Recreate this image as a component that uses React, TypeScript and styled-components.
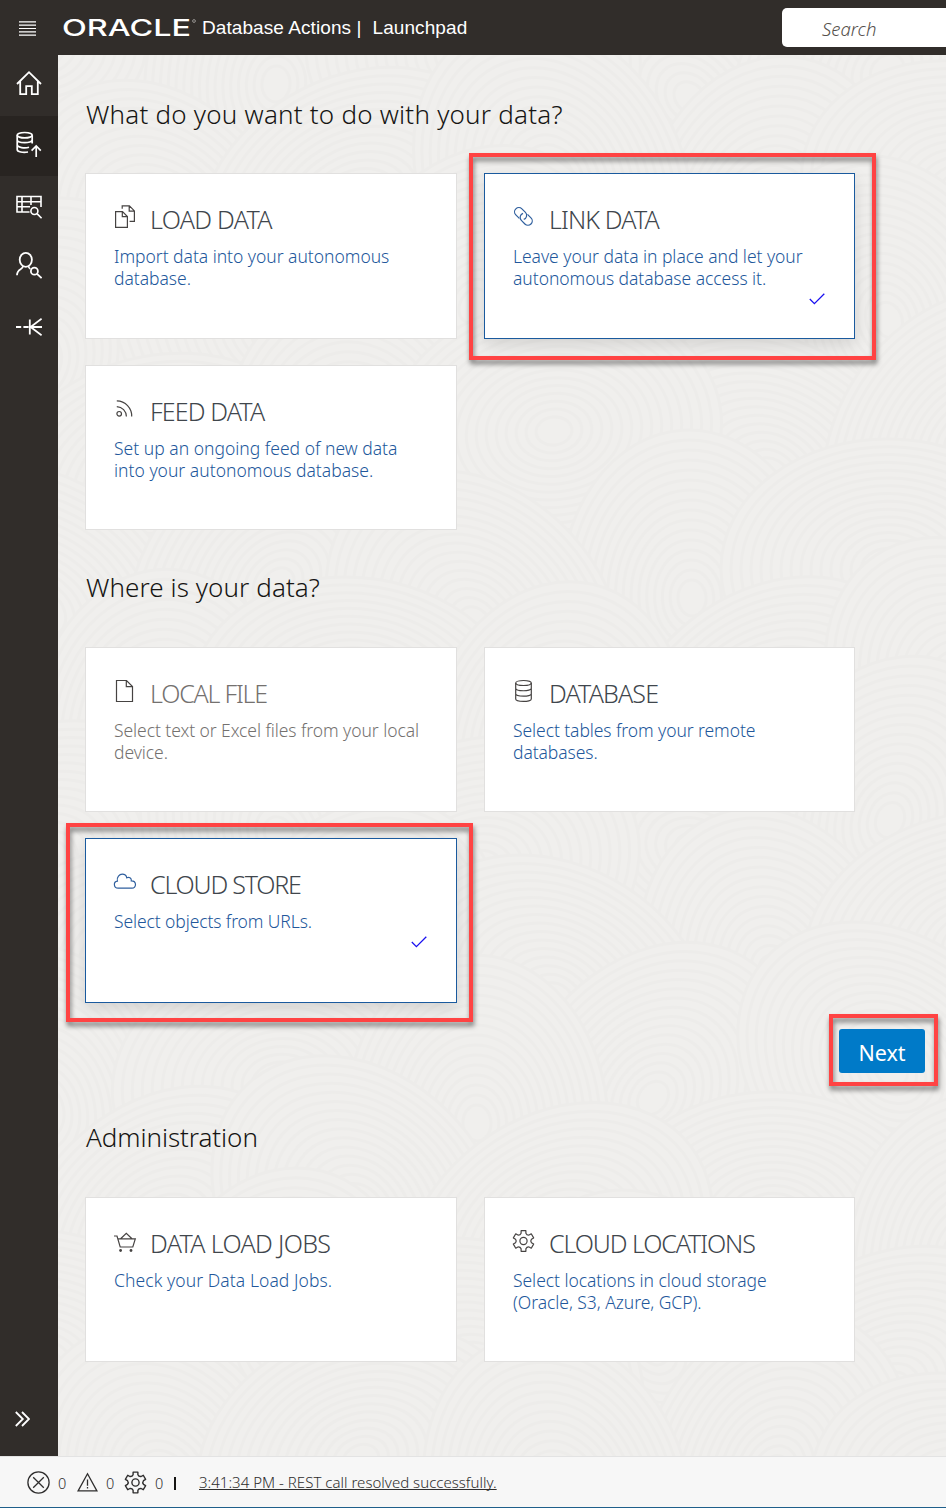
import React from "react";
import styled, { createGlobalStyle, css } from "styled-components";

const sans = `"Noto Sans", "Open Sans", sans-serif`;

const GlobalStyle = createGlobalStyle`
  * { box-sizing: border-box; }
  html, body { margin: 0; padding: 0; }
  body { font-family: ${sans}; font-weight: 300; background: #f0efed; overflow: hidden; }
  h1, h2, h3, p { margin: 0; font-weight: 300; }
  svg { display: block; }
`;

const Page = styled.div`
  display: flex;
  flex-direction: column;
  width: 946px;
  height: 1508px;
`;

const Header = styled.header`
  display: flex;
  align-items: center;
  flex: 0 0 55px;
  background: #312d2a;
  color: #fff;
`;

const MenuButton = styled.div`
  margin: 2px 26px 0 19px;
`;

const Brand = styled.div`
  width: 140px;
`;

const Product = styled.div`
  display: flex;
  gap: 11px;
  flex: 1;
  font: 400 19px/24px "Liberation Sans", Arial, sans-serif;
  letter-spacing: 0.08px;
  white-space: pre;
`;

const Search = styled.div`
  width: 164px;
  height: 39px;
  padding-left: 40px;
  border-radius: 5px 0 0 5px;
  background: #fff;
  color: #55504c;
  font: italic 300 18.5px/41px ${sans};
`;

const Body = styled.div`
  display: flex;
  flex: 1;
  min-height: 0;
`;

const Sidebar = styled.nav`
  display: flex;
  flex-direction: column;
  width: 58px;
  background: #312d2a;
  color: #fff;
`;

const NavItem = styled.div<{ $active?: boolean; $last?: boolean; $lift?: number }>`
  display: flex;
  align-items: center;
  justify-content: center;
  height: ${(p) => (p.$active ? 60 : 61)}px;
  padding-bottom: ${(p) => p.$lift ?? 0}px;
  ${(p) => p.$active && css`background: #282421;`}
  ${(p) =>
    p.$last &&
    css`
      margin-top: auto;
      height: 74px;
      padding-right: 13px;
    `}
`;

const Main = styled.main`
  position: relative;
  flex: 1;
  min-width: 0;
  padding: 41px 0 0 27px;
  overflow: hidden;
  background: #f0efed;
`;

const Backdrop = styled.svg`
  position: absolute;
  inset: 0;
`;

const Section = styled.section<{ $top?: number }>`
  position: relative;
  margin-top: ${(p) => p.$top ?? 0}px;
`;

const SectionTitle = styled.h1<{ $gap: number; $track: number }>`
  margin-bottom: ${(p) => p.$gap}px;
  padding-left: 1px;
  color: #161513;
  font-size: 26px;
  line-height: 36px;
  letter-spacing: ${(p) => p.$track}px;
  white-space: nowrap;
`;

const CardGrid = styled.div<{ $rows: string }>`
  display: grid;
  grid-template-columns: 372px 371px;
  grid-template-rows: ${(p) => p.$rows};
  gap: 26px 27px;
`;

const CardBox = styled.article<{ $selected?: boolean }>`
  position: relative;
  display: flex;
  flex-direction: column;
  padding: 28px 29px 0 28px;
  border: 1px solid ${(p) => (p.$selected ? "#1a5a9e" : "#e1e0df")};
  background: #fff;
  ${(p) => p.$selected && css`box-shadow: 0 6px 16px rgba(0, 0, 0, 0.12);`}
`;

const CardHead = styled.div<{ $color: string }>`
  display: flex;
  height: 34px;
  color: ${(p) => p.$color};
`;

const IconSlot = styled.div`
  width: 37px;
  margin-left: -1px;
  padding-top: 1px;
`;

const CardTitle = styled.h2<{ $track: number; $muted?: boolean }>`
  color: ${(p) => (p.$muted ? "#74716f" : "#40464c")};
  font-size: 25px;
  font-weight: 340;
  line-height: 34px;
  letter-spacing: ${(p) => p.$track}px;
  white-space: nowrap;
`;

const CardText = styled.p<{ $track: number; $muted?: boolean }>`
  margin-top: 9px;
  color: ${(p) => (p.$muted ? "#74716f" : "#22579b")};
  font-size: 17.5px;
  line-height: 22px;
  letter-spacing: ${(p) => p.$track}px;
  white-space: pre;
`;

const CheckSlot = styled.div`
  align-self: flex-end;
  margin-top: 4px;
`;

const Callout = styled.div<{ $inset: string }>`
  position: absolute;
  inset: ${(p) => p.$inset};
  border: 4px solid #ff4343;
  filter: drop-shadow(1px 4px 2.5px rgba(0, 0, 0, 0.5));
  pointer-events: none;
  z-index: 1;
`;

const Actions = styled.div`
  position: relative;
  display: flex;
  justify-content: flex-end;
  margin: 26px 21px 0 0;
`;

const NextButton = styled.button`
  position: relative;
  width: 86px;
  height: 44px;
  padding: 3px 0 0;
  border: 0;
  border-radius: 3px;
  background: #007ac8;
  color: #fff;
  font: 400 21.5px/40px ${sans};
`;

const Footer = styled.footer`
  display: flex;
  align-items: center;
  flex: 0 0 52px;
  padding-left: 27px;
  border-top: 1px solid #e3e3e3;
  border-bottom: 1px solid #1f5f8b;
  background: #f7f7f7;
  color: #2f2e2e;
`;

const Counter = styled.div<{ $width: number }>`
  display: flex;
  align-items: center;
  gap: 8px;
  width: ${(p) => p.$width}px;
  font-size: 14.5px;
  line-height: 20px;
`;

const Count = styled.span`
  padding-top: 2px;
`;

const Divider = styled.div`
  width: 2px;
  height: 13px;
  margin: 2px 23px 0 0;
  background: #161513;
`;

const StatusLink = styled.a`
  font-size: 15px;
  line-height: 20px;
  text-decoration: underline;
  text-underline-offset: 1px;
  text-decoration-thickness: 1px;
  text-decoration-skip-ink: none;
  letter-spacing: 0.02px;
  white-space: nowrap;
`;

type IconProps = { w: number; h: number; sw?: number; box?: string; children: React.ReactNode };

const Icon = ({ w, h, sw = 1.2, box, children }: IconProps) => (
  <svg
    width={w}
    height={h}
    viewBox={box ?? `0 0 ${w} ${h}`}
    fill="none"
    stroke="currentColor"
    strokeWidth={sw}
    strokeLinejoin="miter"
  >
    {children}
  </svg>
);

const polar = (r: number, deg: number) => {
  const a = (deg * Math.PI) / 180;
  return `${(11.5 + r * Math.cos(a)).toFixed(2)} ${(11.5 + r * Math.sin(a)).toFixed(2)}`;
};

const gearPath =
  "M" +
  [0, 1, 2, 3, 4, 5]
    .map((i) => {
      const a = i * 60 - 90;
      return `${polar(10.6, a - 13)}L${polar(10.6, a + 13)}L${polar(8.2, a + 17)}Q${polar(6.6, a + 30)} ${polar(8.2, a + 43)}`;
    })
    .join("L") +
  "Z";

const Gear = ({ size, sw }: { size: number; sw?: number }) => (
  <Icon w={size} h={size} box="0 0 23 23" sw={sw}>
    <path d={gearPath} strokeLinejoin="round" />
    <circle cx="11.5" cy="11.5" r="3.6" />
  </Icon>
);

const icons = {
  copy: (
    <Icon w={24} h={26}>
      <path d="M2.6 8.6H9.5L14.4 13.5V24.4H2.6ZM9.3 8.8V13.7H14.2M9.2 5.8V2.9H16.4L21.4 7.9V18.4H16.6M16.2 3.1V8.1H21.2" />
    </Icon>
  ),
  link: (
    <Icon w={24} h={26}>
      <g transform="translate(11.4 13.4) rotate(45)">
        <path d="M-1.5 4.3H-6.4A4.3 4.3 0 0 1 -6.4 -4.3H-1.4A4.3 4.3 0 0 1 2.4 1.9" />
        <path d="M1.5 -4.3H6.4A4.3 4.3 0 0 1 6.4 4.3H1.4A4.3 4.3 0 0 1 -2.4 -1.9" />
      </g>
    </Icon>
  ),
  feed: (
    <Icon w={24} h={26}>
      <circle cx="6.2" cy="18.8" r="2.3" />
      <path d="M3.8 11.6A10 10 0 0 1 13.4 21.6M3.8 5.8A15.2 15.2 0 0 1 18.7 21.6" />
    </Icon>
  ),
  file: (
    <Icon w={24} h={26}>
      <path d="M3.5 3.5H13.5L19.5 9.5V24.5H3.5ZM13.3 3.7V9.7H19.3" />
    </Icon>
  ),
  database: (
    <Icon w={24} h={26}>
      <ellipse cx="11.5" cy="6" rx="7.8" ry="2.5" />
      <path d="M3.7 6V22C3.7 25.2 19.3 25.2 19.3 22V6M3.7 11.2C3.7 14.6 19.3 14.6 19.3 11.2M3.7 16.8C3.7 20 19.3 20 19.3 16.8" />
    </Icon>
  ),
  cloud: (
    <Icon w={24} h={26}>
      <path d="M5.2 20.2C.3 20.2 .2 13.5 4.4 13.1C3.4 8.8 6.6 6.2 9.2 6.2C11.7 6.2 13.4 7.8 13.8 9.8C16 8.5 18.7 10 18.3 12.8C24 12.9 23.5 20.2 19 20.2Z" />
    </Icon>
  ),
  cart: (
    <Icon w={24} h={26}>
      <path d="M1 9H4L7.2 20H19.8L22.3 11.8H4.8M7.6 11.8L13.3 6.4L19 11.8" />
      <circle cx="7.6" cy="23.5" r="1.4" fill="currentColor" stroke="none" />
      <circle cx="18" cy="23.5" r="1.4" fill="currentColor" stroke="none" />
    </Icon>
  ),
  gear: (
    <Icon w={24} h={26} box="0 -2.5 24 26">
      <path d={gearPath} strokeLinejoin="round" />
      <circle cx="11.5" cy="11.5" r="3.6" />
    </Icon>
  ),
};

type CardProps = {
  icon: keyof typeof icons;
  title: string;
  text: string;
  titleTrack: number;
  textTrack?: number;
  muted?: boolean;
  selected?: boolean;
  callout?: string;
};

const Card = ({ icon, title, text, titleTrack, textTrack = 0, muted, selected, callout }: CardProps) => (
  <CardBox $selected={selected}>
    <CardHead $color={selected ? "#2f5f9e" : "#464342"}>
      <IconSlot>{icons[icon]}</IconSlot>
      <CardTitle $track={titleTrack} $muted={muted}>{title}</CardTitle>
    </CardHead>
    <CardText $track={textTrack} $muted={muted}>{text}</CardText>
    {selected && (
      <CheckSlot>
        <svg width="16" height="12" viewBox="0 0 16 12" fill="none" stroke="#1a10f0" strokeWidth="1.3">
          <path d="M.8 6L5.4 10.6L15.3 .8" />
        </svg>
      </CheckSlot>
    )}
    {callout && <Callout $inset={callout} />}
  </CardBox>
);

// Fans of concentric rings, each one covering part of the fans painted before it.
const fans = Array.from({ length: 60 }, (_, i) => {
  const col = (i * 3) % 5;
  const row = Math.floor(i / 5);
  return {
    x: col * 205 + (row % 2) * 100 - 20 + ((i * 37) % 41),
    y: row * 128 + ((i * 53) % 67) - 10,
    turn: (i * 47) % 180,
  };
});
const rings = Array.from({ length: 16 }, (_, i) => 168 - i * 10);

const Texture = () => (
  <Backdrop width="888" height="1401" fill="#f0efed" stroke="#edecea" strokeWidth="3">
    {fans.map((f, i) => (
      <g key={i} transform={`translate(${f.x} ${f.y}) rotate(${f.turn})`}>
        {rings.map((r) => (
          <ellipse key={r} rx={r} ry={r * 0.78} />
        ))}
      </g>
    ))}
  </Backdrop>
);

export default function App() {
  return (
    <Page>
      <GlobalStyle />
      <Header>
        <MenuButton>
          <Icon w={17} h={15}>
            <path d="M0 .8H17M0 4.2H17M0 7.5H17M0 10.8H17M0 14.2H17" />
          </Icon>
        </MenuButton>
        <Brand>
          <svg width="138" height="30" viewBox="0 0 138 30" fill="#fff">
            <text x="0" y="22.5" fontFamily="Inter, sans-serif" fontSize="22.5" fontWeight="500" textLength="129" lengthAdjust="spacingAndGlyphs">
              ORACLE
            </text>
            <circle cx="132" cy="8" r="1.4" fill="none" stroke="#aaa7a5" strokeWidth=".8" />
          </svg>
        </Brand>
        <Product>
          <span>Database Actions |</span>
          <span>Launchpad</span>
        </Product>
        <Search>Search</Search>
      </Header>
      <Body>
        <Sidebar>
          <NavItem $lift={6}>
            <Icon w={26} h={26} sw={1.8}>
              <path d="M1 14L13 2.2L25 14M4.2 11.5V24.2H10.2V16.2H15.8V24.2H21.8V11.5" />
            </Icon>
          </NavItem>
          <NavItem $active $lift={3}>
            <Icon w={26} h={28} sw={1.7}>
              <ellipse cx="8.7" cy="4.2" rx="7.5" ry="2.7" />
              <path d="M1.2 4.2V18.4C1.2 21 7 21.8 12 21M16.2 4.2V12.5M1.2 8.8C1.2 12.6 16.2 12.6 16.2 8.8M1.2 13.6C1.2 16.8 9 17.6 13 16.3" />
              <path d="M20.2 26V15.6M15.6 19.6L20.2 15L24.8 19.6" />
            </Icon>
          </NavItem>
          <NavItem>
            <Icon w={26} h={24} sw={1.6}>
              <path d="M13.5 17H1V1.5H25V12M1 6.7H25M1 11.8H14M6 1.5V17M15 1.5V10" />
              <circle cx="18.4" cy="16" r="3.5" />
              <path d="M21 18.6L25.6 23.2" />
            </Icon>
          </NavItem>
          <NavItem $lift={6}>
            <Icon w={26} h={28} sw={1.8}>
              <ellipse cx="9.8" cy="8.8" rx="6.1" ry="7" />
              <path d="M7 15C7 19 1 17.5 1 24.2M12.5 15C12.7 16.8 13.4 17.6 14.4 18" />
              <circle cx="18.4" cy="20.2" r="3.5" />
              <path d="M21 22.8L25.6 27.2" />
            </Icon>
          </NavItem>
          <NavItem $lift={4}>
            <Icon w={26} h={20} sw={1.8}>
              <path d="M0 10H5.2M7.4 10H12.6M13.8 2.6V17.4M14 10H26M25.6 1.8L14.6 10L25.6 18.2" />
            </Icon>
          </NavItem>
          <NavItem $last>
            <Icon w={15} h={16} sw={1.8}>
              <path d="M.8 1L7.8 8L.8 15M7 1L14 8L7 15" />
            </Icon>
          </NavItem>
        </Sidebar>
        <Main>
          <Texture />
          <Section>
            <SectionTitle $gap={41} $track={0.22}>What do you want to do with your data?</SectionTitle>
            <CardGrid $rows="166px 165px">
              <Card icon="copy" title="LOAD DATA" text={"Import data into your autonomous\ndatabase."} titleTrack={-0.7} textTrack={-0.03} />
              <Card
                icon="link"
                title="LINK DATA"
                text={"Leave your data in place and let your\nautonomous database access it."}
                titleTrack={-0.85}
                textTrack={-0.04}
                selected
                callout="-21px -22px -22px -16px"
              />
              <Card icon="feed" title="FEED DATA" text={"Set up an ongoing feed of new data\ninto your autonomous database."} titleTrack={-0.85} textTrack={0.01} />
            </CardGrid>
          </Section>
          <Section $top={39}>
            <SectionTitle $gap={42} $track={0.08}>Where is your data?</SectionTitle>
            <CardGrid $rows="165px 165px">
              <Card icon="file" title="LOCAL FILE" text={"Select text or Excel files from your local\ndevice."} titleTrack={-1.2} textTrack={-0.07} muted />
              <Card icon="database" title="DATABASE" text={"Select tables from your remote\ndatabases."} titleTrack={-0.85} textTrack={-0.08} />
              <Card
                icon="cloud"
                title="CLOUD STORE"
                text="Select objects from URLs."
                titleTrack={-1.2}
                textTrack={-0.1}
                selected
                callout="-16px -17px -20px -20px"
              />
            </CardGrid>
          </Section>
          <Actions>
            <NextButton>
              Next
              <Callout $inset="-15px -13px -13px -10px" />
            </NextButton>
          </Actions>
          <Section $top={46}>
            <SectionTitle $gap={42} $track={-0.06}>Administration</SectionTitle>
            <CardGrid $rows="165px">
              <Card icon="cart" title="DATA LOAD JOBS" text="Check your Data Load Jobs." titleTrack={-0.65} textTrack={0.08} />
              <Card icon="gear" title="CLOUD LOCATIONS" text={"Select locations in cloud storage\n(Oracle, S3, Azure, GCP)."} titleTrack={-1.1} textTrack={-0.05} />
            </CardGrid>
          </Section>
        </Main>
      </Body>
      <Footer>
        <Counter $width={50}>
          <Icon w={23} h={23} sw={1.3}>
            <circle cx="11.5" cy="11.5" r="10.6" />
            <path d="M6.2 6.2L16.8 16.8M16.8 6.2L6.2 16.8" />
          </Icon>
          <Count>0</Count>
        </Counter>
        <Counter $width={47}>
          <Icon w={21} h={20} sw={1.3}>
            <path d="M10.5 1.8L19.9 18.9H1.1ZM10.5 7.5V13.8M10.5 15V16.6" />
          </Icon>
          <Count>0</Count>
        </Counter>
        <Counter $width={50}>
          <Gear size={23} sw={1.4} />
          <Count>0</Count>
        </Counter>
        <Divider />
        <StatusLink>3:41:34 PM - REST call resolved successfully.</StatusLink>
      </Footer>
    </Page>
  );
}
